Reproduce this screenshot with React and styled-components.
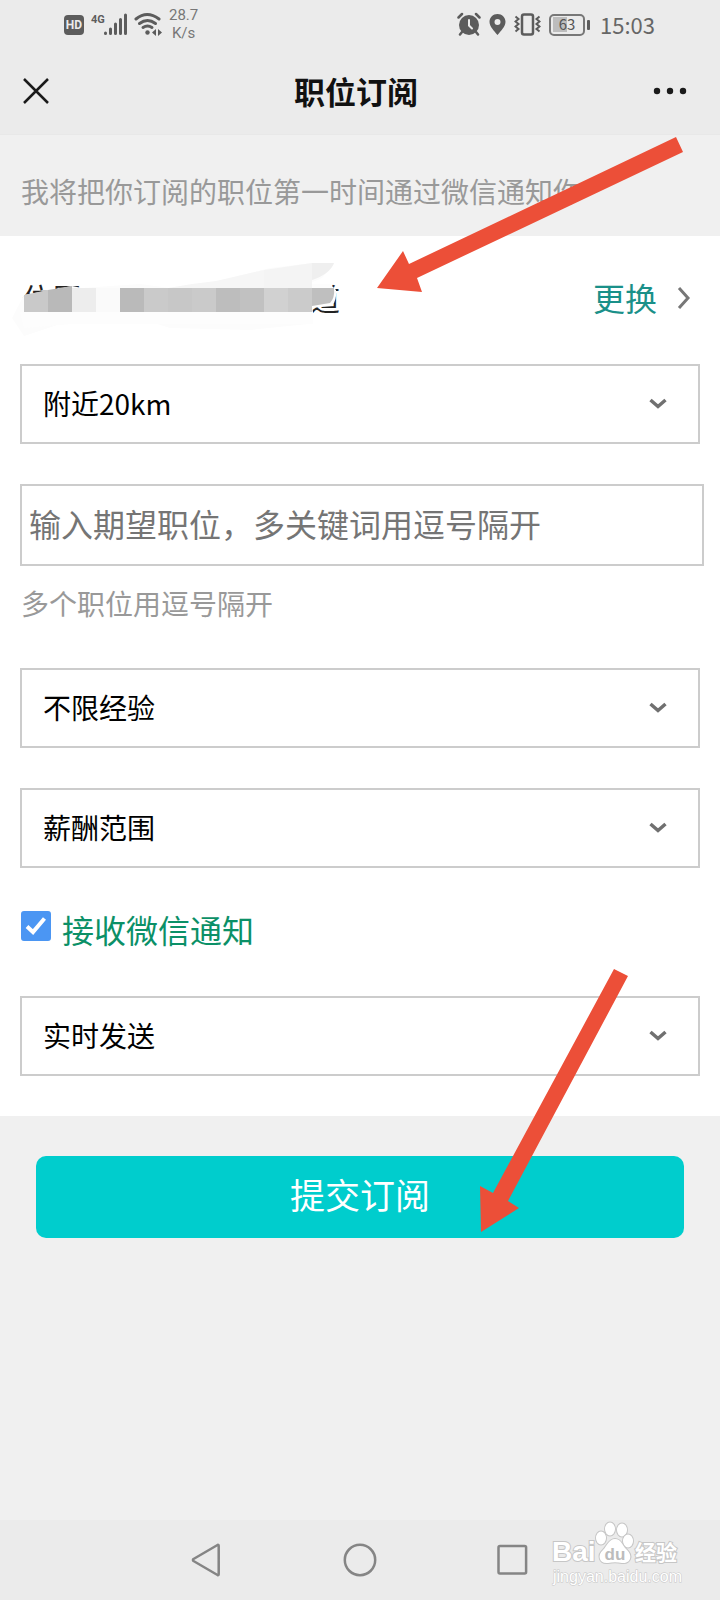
import React, {useState} from 'react';
import styled, {createGlobalStyle} from 'styled-components';

const GlobalStyle = createGlobalStyle`
    * {
        box-sizing: border-box;
    }
    body {
        margin: 0;
        background: #f0f0f0;
        font-family: "Noto Sans CJK SC", sans-serif;
    }
    button, input, select {
        font-family: inherit;
        margin: 0;
    }
`;

const Page = styled.div`
    position: relative;
    display: flex;
    flex-direction: column;
    min-height: 100vh;
    overflow: hidden;
`;

const Header = styled.header`
    background: #ebebeb;
    border-bottom: 1px solid #e8e8e8;
`;

const StatusBar = styled.div`
    display: flex;
    justify-content: space-between;
    height: 48px;
    padding: 0 65px 0 64px;
    color: #5c5c5c;
`;

const StatusGroup = styled.div`
    display: flex;
    align-items: center;
    gap: ${({$gap}) => $gap}px;
`;

const Speed = styled.span`
    font: 15px/18px Roboto, sans-serif;
    text-align: center;
    color: #777;
`;

const Clock = styled.time`
    margin-left: 2px;
    font-size: 22px;
    line-height: 24px;
    color: #666;
`;

const TitleBar = styled.div`
    display: grid;
    grid-template-columns: 46px 1fr 40px;
    align-items: center;
    height: 86px;
    padding: 0 30px 0 16px;
`;

const IconButton = styled.button`
    display: flex;
    align-items: center;
    justify-content: center;
    width: 40px;
    height: 40px;
    padding: 0;
    border: 0;
    background: none;
    color: #1a1a1a;
`;

const Title = styled.h1`
    margin: 0;
    font-size: 31px;
    line-height: 40px;
    font-weight: 700;
    text-align: center;
    color: #111;
`;

const Notice = styled.p`
    margin: 0;
    padding: 36px 21px 25px;
    font-size: 28px;
    line-height: 40px;
    white-space: nowrap;
    color: #999;
`;

const Form = styled.form`
    display: flex;
    flex-direction: column;
    flex: 1;
`;

const Fields = styled.div`
    display: flex;
    flex-direction: column;
    padding: 0 16px 40px 20px;
    background: #fff;
`;

const LocationRow = styled.div`
    position: relative;
    display: flex;
    align-items: center;
    height: 128px;
    padding: 0 0 6px 2px;
    font-size: 30px;
    line-height: 40px;
    color: #222;
`;

const Street = styled.span`
    margin-left: 228px;
`;

const Mosaic = styled.svg`
    position: absolute;
    top: 0;
    left: -20px;
`;

const ChangeLink = styled.a`
    display: flex;
    align-items: center;
    gap: 20px;
    margin-left: auto;
    padding-right: 13px;
    font-size: 32px;
    color: #1a9089;
    text-decoration: none;
`;

const SelectBox = styled.div`
    display: grid;
    align-items: center;
    margin: 0 4px ${({$last}) => ($last ? 0 : 40)}px 0;

    > * {
        grid-area: 1 / 1;
    }
    > svg {
        justify-self: end;
        margin-right: 32px;
        pointer-events: none;
    }
`;

const Select = styled.select`
    appearance: none;
    width: 100%;
    height: 80px;
    padding: 0 64px 2px 21px;
    border: 2px solid #ccc;
    border-radius: 0;
    background: #fff;
    font-size: 28px;
    color: #000;
`;

const KeywordInput = styled.input`
    width: 100%;
    height: 82px;
    padding: 0 7px 5px;
    border: 2px solid #ccc;
    font-size: 32px;
    color: #000;

    &::placeholder {
        color: #757575;
        opacity: 1;
    }
`;

const Hint = styled.p`
    margin: 17px 1px 45px;
    font-size: 28px;
    line-height: 40px;
    color: #999;
`;

const NotifyLabel = styled.label`
    display: flex;
    align-items: flex-start;
    gap: 11px;
    height: 88px;
    padding: 3px 1px 0;
    font-size: 32px;
    line-height: 36px;
    color: #0b9067;
`;

const CheckSlot = styled.span`
    display: grid;

    > * {
        grid-area: 1 / 1;
    }
    > svg {
        pointer-events: none;
    }
`;

const Checkbox = styled.input`
    appearance: none;
    width: 30px;
    height: 30px;
    border: 2px solid #4b96f3;
    border-radius: 3px;
    background: ${({checked}) => (checked ? '#4b96f3' : '#fff')};
`;

const Submit = styled.button`
    height: 82px;
    margin: 40px 36px;
    padding: 0 0 8px;
    border: 0;
    border-radius: 10px;
    background: #00cdcd;
    font-size: 35px;
    color: #fff;
`;

const NavBar = styled.nav`
    display: flex;
    justify-content: center;
    align-items: center;
    gap: 113px;
    height: 80px;
    background: #ebebeb;
`;

const Arrow = styled.svg`
    position: absolute;
    top: ${({$top}) => $top}px;
    left: ${({$left}) => $left}px;
    pointer-events: none;
`;

const Watermark = styled.svg`
    position: absolute;
    right: 30px;
    bottom: 12px;
    pointer-events: none;
`;

const Dropdown = ({label, options, last}) => (
    <SelectBox $last={last}>
        <Select aria-label={label} defaultValue={options[0]}>
            {options.map((option) => <option key={option}>{option}</option>)}
        </Select>
        <svg width='20' height='14' viewBox='0 0 20 14' fill='none' stroke='#707070' strokeWidth='3.500'>
            <path d='M2.500 3 L10 9.500 L17.500 3' />
        </svg>
    </SelectBox>
);

// [x, colour] of the full blocks in the pixelated strip
const BLOCKS = [
    [72, '#ededed'],
    [96, '#fafafa'],
    [120, '#bababa'],
    [144, '#cacaca'],
    [168, '#c7c7c7'],
    [192, '#cacaca'],
    [216, '#bdbdbd'],
    [240, '#c1c1c1'],
    [264, '#d1d1d1'],
    [288, '#cbcbcb'],
];

const LocationMosaic = () => (
    <Mosaic width='360' height='104' viewBox='0 6 360 104' aria-hidden='true'>
        <path d='M12 88 L24 65 L72 56 L82 58 L96 57 L140 54 L170 58 L215 52 L270 38 L312 33 L334 34 L322 48 L308 54 L330 58 L312 76 L313 82 L308 94 L250 100 L170 98 L145 90 L72 90 L24 106 Z' fill='#fcfcfc' />
        <path d='M168 58 L192 54 L216 51 L264 40 V58 Z' fill='#f6f6f6' />
        <path d='M264 40 L312 33 V58 H264 Z' fill='#f4f4f4' />
        <path d='M312 33 H334 Q330 44 312 50 Z' fill='#efefef' />
        <path d='M20 82 H313 V94 H72 L24 98 Z' fill='#fdfdfd' />
        <path d='M24 65 L48 60 V82 H24 Z' fill='#c9c9c9' />
        <path d='M48 60 L72 56 V82 H48 Z' fill='#b9b9b9' />
        {BLOCKS.map(([x, fill]) => (
            <rect key={x} x={x} y='58' width='24' height='24' fill={fill} />
        ))}
        <path d='M312 54 H330 L336 60 Q337 70 332 76 L312 78 Z' fill='#fdfdfd' />
        <path d='M312 58 H334 Q335 68 330 73 L312 76 Z' fill='#bfbfbf' />
    </Mosaic>
);

const App = () => {
    const [notify, setNotify] = useState(true);

    return (
        <Page>
            <GlobalStyle />
            <Header>
                <StatusBar>
                    <StatusGroup $gap={7}>
                        <svg width='63' height='24' viewBox='0 0 63 24' fill='currentColor'>
                            <rect x='0' y='3' width='20' height='20' rx='4' />
                            <text x='10' y='17' textAnchor='middle' fontFamily='Roboto, sans-serif' fontWeight='700' fontSize='12' fill='#ebebeb'>HD</text>
                            <text x='27' y='11' fontFamily='Roboto, sans-serif' fontWeight='700' fontSize='11'>4G</text>
                            <g stroke='currentColor' strokeWidth='3' strokeLinecap='round'>
                                <path d='M41.500 21 V21.500 M46.500 17 V21.500 M51.500 12 V21.500 M56.500 7.500 V21.500 M61.500 3 V21.500' />
                            </g>
                        </svg>
                        <svg width='28' height='24' viewBox='0 0 28 24' fill='none' stroke='currentColor' strokeWidth='3' strokeLinecap='round'>
                            <path d='M2 7 Q13 -2 25 7' />
                            <path d='M5.500 11.500 Q13.500 5.500 21.500 11.500' />
                            <path d='M9 15.500 Q13.500 12.500 18 15.500' />
                            <circle cx='13.500' cy='20.500' r='2.200' fill='currentColor' stroke='none' />
                            <path d='M18 20.500 L22 17 V24 Z M24 17 L28 20.500 L24 24 Z' fill='currentColor' stroke='none' />
                        </svg>
                        <Speed>28.7<br />K/s</Speed>
                    </StatusGroup>
                    <StatusGroup $gap={8}>
                        <svg width='24' height='24' viewBox='0 0 24 24' fill='none' stroke='currentColor' strokeWidth='2.500' strokeLinecap='round'>
                            <circle cx='12' cy='13' r='10' fill='currentColor' stroke='none' />
                            <path d='M1.500 5.500 L5 2 M22.500 5.500 L19 2 M5 20 L3 22.500 M19 20 L21 22.500' />
                            <path d='M12 8 V13.500 L15 16.500' stroke='#ebebeb' strokeWidth='2' />
                        </svg>
                        <svg width='17' height='24' viewBox='0 0 17 24' fill='currentColor'>
                            <path fillRule='evenodd' d='M8.500 2 C13 2 16.500 5.400 16.500 9.800 C16.500 14.500 12 19 8.500 23 C5 19 0.500 14.500 0.500 9.800 C0.500 5.400 4 2 8.500 2 Z M8.500 7 A3 3 0 1 0 8.500 13 A3 3 0 1 0 8.500 7 Z' />
                        </svg>
                        <svg width='27' height='24' viewBox='0 0 27 24' fill='none' stroke='currentColor' strokeWidth='2.500'>
                            <rect x='8' y='2.500' width='11' height='20' rx='2' />
                            <path d='M1.500 4.500 L4.500 7 L1.500 9.500 L4.500 12 L1.500 14.500 L4.500 17 L1.500 19.500 M25.500 4.500 L22.500 7 L25.500 9.500 L22.500 12 L25.500 14.500 L22.500 17 L25.500 19.500' strokeWidth='2' />
                        </svg>
                        <svg width='41' height='24' viewBox='0 0 41 24'>
                            <rect x='4' y='5' width='14' height='15' fill='#bdbdbd' />
                            <rect x='1' y='3' width='34' height='20' rx='4' fill='none' stroke='#777' strokeWidth='2' />
                            <rect x='38' y='8' width='3' height='10' rx='1' fill='#5c5c5c' />
                            <text x='18' y='18' textAnchor='middle' fontFamily='Noto Sans CJK SC, sans-serif' fontSize='15' fill='#555'>63</text>
                        </svg>
                        <Clock>15:03</Clock>
                    </StatusGroup>
                </StatusBar>
                <TitleBar>
                    <IconButton type='button' aria-label='关闭'>
                        <svg width='26' height='26' viewBox='0 0 26 26' fill='none' stroke='currentColor' strokeWidth='2.500'>
                            <path d='M1 1 L25 25 M25 1 L1 25' />
                        </svg>
                    </IconButton>
                    <Title>职位订阅</Title>
                    <IconButton type='button' aria-label='更多'>
                        <svg width='34' height='8' viewBox='0 0 34 8' fill='currentColor'>
                            <circle cx='4' cy='4' r='3.200' />
                            <circle cx='17' cy='4' r='3.200' />
                            <circle cx='30' cy='4' r='3.200' />
                        </svg>
                    </IconButton>
                </TitleBar>
            </Header>

            <Notice>我将把你订阅的职位第一时间通过微信通知你</Notice>

            <Form onSubmit={(event) => event.preventDefault()}>
                <Fields>
                    <LocationRow>
                        <span>位置</span>
                        <Street>道</Street>
                        <LocationMosaic />
                        <ChangeLink href='#location'>
                            更换
                            <svg width='14' height='24' viewBox='0 0 14 24' fill='none' stroke='#777' strokeWidth='3'>
                                <path d='M2 3 L11 13 L2 23' />
                            </svg>
                        </ChangeLink>
                    </LocationRow>
                    <Dropdown label='距离' options={['附近20km']} />
                    <KeywordInput type='text' aria-label='期望职位' placeholder='输入期望职位，多关键词用逗号隔开' />
                    <Hint>多个职位用逗号隔开</Hint>
                    <Dropdown label='经验' options={['不限经验']} />
                    <Dropdown label='薪酬' options={['薪酬范围']} />
                    <NotifyLabel>
                        <CheckSlot>
                            <Checkbox
                                type='checkbox'
                                checked={notify}
                                onChange={(event) => setNotify(event.target.checked)} />
                            <svg width='30' height='30' viewBox='0 0 30 30' fill='none' stroke='#fff' strokeWidth='4'>
                                <path d='M6 15.500 L12 21 L23.500 7.500' />
                            </svg>
                        </CheckSlot>
                        接收微信通知
                    </NotifyLabel>
                    <Dropdown label='发送频率' options={['实时发送']} last />
                </Fields>
                <Submit type='submit'>提交订阅</Submit>
            </Form>

            <NavBar>
                <IconButton type='button' aria-label='返回'>
                    <svg width='32' height='36' viewBox='0 0 32 36' fill='none' stroke='#858585' strokeWidth='2.500' strokeLinejoin='round'>
                        <path d='M2.500 17 L26.500 3 Q27.700 2.500 27.700 4 V32 Q27.700 33.500 26.500 33 L2.500 19 Q1.500 18 2.500 17 Z' />
                    </svg>
                </IconButton>
                <IconButton type='button' aria-label='主页'>
                    <svg width='34' height='34' viewBox='0 0 34 34' fill='none' stroke='#858585' strokeWidth='2.500'>
                        <circle cx='17' cy='17' r='15.200' />
                    </svg>
                </IconButton>
                <IconButton type='button' aria-label='最近任务'>
                    <svg width='32' height='32' viewBox='0 0 32 32' fill='none' stroke='#858585' strokeWidth='2.500'>
                        <rect x='1.500' y='2' width='27.600' height='27.600' rx='1.500' />
                    </svg>
                </IconButton>
            </NavBar>

            <Arrow $top={130} $left={370} width='320' height='170' viewBox='370 130 320 170' fill='#ec4f38'>
                <path d='M377 288 L403 251 L409 264 L676 137 L683 152 L417 278 L422 292 Z' />
            </Arrow>
            <Arrow $top={960} $left={470} width='170' height='280' viewBox='470 960 170 280' fill='#ec4f38'>
                <path d='M481 1232 L480 1186 L493 1193 L614 969 L628 976 L508 1201 L519 1208 Z' />
            </Arrow>

            <Watermark width='140' height='68' viewBox='550 1520 140 68' fill='#fff' stroke='#c6c6c6' strokeWidth='2' paintOrder='stroke'>
                <text x='552' y='1561' fontFamily='Liberation Sans, sans-serif' fontWeight='700' fontSize='28'>Bai</text>
                <ellipse cx='601' cy='1538' rx='5' ry='6.500' />
                <ellipse cx='610' cy='1529' rx='5' ry='6.500' />
                <ellipse cx='622' cy='1530' rx='5' ry='6.500' />
                <ellipse cx='628' cy='1541' rx='5' ry='6.500' />
                <path d='M615 1539 C621 1539 622 1545 626 1549 C634 1556 630 1564 622 1563 C617 1562 613 1562 608 1563 C599 1564 597 1555 603 1550 C607 1546 609 1539 615 1539 Z' />
                <text x='615' y='1560' textAnchor='middle' fontFamily='Liberation Sans, sans-serif' fontWeight='700' fontSize='17' fill='#bcbcbc' stroke='none'>du</text>
                <text x='635' y='1560' fontFamily='Noto Sans CJK SC, sans-serif' fontWeight='700' fontSize='21'>经验</text>
                <text x='553' y='1582' fontFamily='Liberation Sans, sans-serif' fontSize='16' strokeWidth='1'>jingyan.baidu.com</text>
            </Watermark>
        </Page>
    );
};

export default App;
